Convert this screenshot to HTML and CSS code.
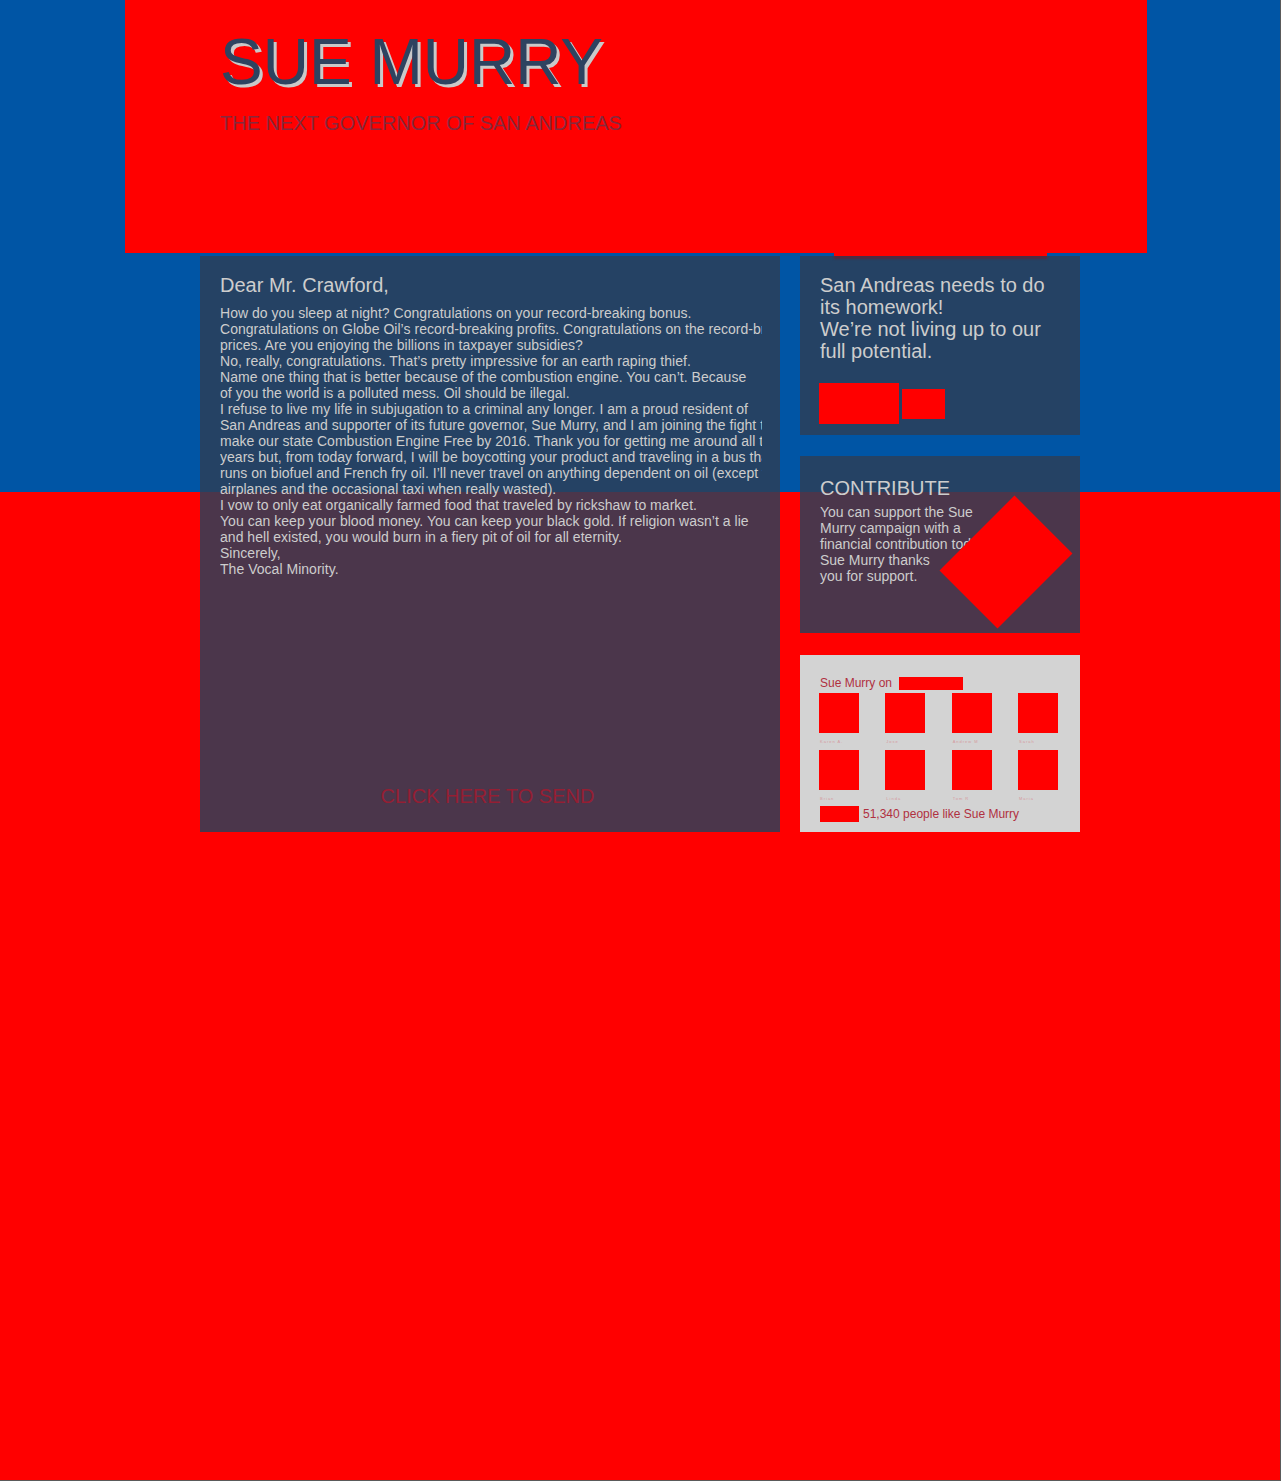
FILE: index.html
```html
<!DOCTYPE html>
<html lang="en">
<head>
<meta charset="utf-8">
<title>Sue Murry — The Next Governor of San Andreas</title>
<link rel="stylesheet" href="styles.css">
</head>
<body>
<div class="page">
  <header class="masthead">
    <h1 class="title">SUE MURRY</h1>
    <p class="tagline">THE NEXT GOVERNOR OF SAN ANDREAS</p>
    <span class="nav-tab"></span>
  </header>

  <main class="content">
    <section class="panel letter">
      <h2 class="letter-greeting">Dear Mr. Crawford,</h2>
      <div class="letter-body">
        How do you sleep at night? Congratulations on your record-breaking bonus.<br>
        Congratulations on Globe Oil’s record-breaking profits. Congratulations on the record-breaking gas<br>
        prices. Are you enjoying the billions in taxpayer subsidies?<br>
        No, really, congratulations. That’s pretty impressive for an earth raping thief.<br>
        Name one thing that is better because of the combustion engine. You can’t. Because<br>
        of you the world is a polluted mess. Oil should be illegal.<br>
        I refuse to live my life in subjugation to a criminal any longer. I am a proud resident of<br>
        San Andreas and supporter of its future governor, Sue Murry, and I am joining the fight to<br>
        make our state Combustion Engine Free by 2016. Thank you for getting me around all these<br>
        years but, from today forward, I will be boycotting your product and traveling in a bus that<br>
        runs on biofuel and French fry oil. I’ll never travel on anything dependent on oil (except for<br>
        airplanes and the occasional taxi when really wasted).<br>
        I vow to only eat organically farmed food that traveled by rickshaw to market.<br>
        You can keep your blood money. You can keep your black gold. If religion wasn’t a lie<br>
        and hell existed, you would burn in a fiery pit of oil for all eternity.<br>
        Sincerely,<br>
        The Vocal Minority.
      </div>
      <a class="send-link" href="#">CLICK HERE TO SEND</a>
    </section>

    <aside class="sidebar">
      <section class="panel promo">
        <p class="promo-text">San Andreas needs to do its homework!<br>We’re not living up to our full potential.</p>
        <div class="promo-buttons">
          <span class="img-box btn-large"></span>
          <span class="img-box btn-small"></span>
        </div>
      </section>

      <section class="panel contribute">
        <h3 class="contribute-title">CONTRIBUTE</h3>
        <p class="contribute-text">You can support the Sue<br>Murry campaign with a<br>financial contribution today.<br>Sue Murry thanks<br>you for support.</p>
        <span class="img-box diamond"></span>
      </section>

      <section class="fb">
        <div class="fb-head">
          <span class="fb-label">Sue Murry on</span>
          <span class="img-box fb-logo"></span>
        </div>
        <div class="fb-grid">
          <div class="fb-fan"><span class="img-box fan-pic"></span><span class="fan-name">Karen A.</span></div>
          <div class="fb-fan"><span class="img-box fan-pic"></span><span class="fan-name">Jose</span></div>
          <div class="fb-fan"><span class="img-box fan-pic"></span><span class="fan-name">Andrew M</span></div>
          <div class="fb-fan"><span class="img-box fan-pic"></span><span class="fan-name">Sarah</span></div>
          <div class="fb-fan"><span class="img-box fan-pic"></span><span class="fan-name">Brian</span></div>
          <div class="fb-fan"><span class="img-box fan-pic"></span><span class="fan-name">Linda</span></div>
          <div class="fb-fan"><span class="img-box fan-pic"></span><span class="fan-name">Tom R</span></div>
          <div class="fb-fan"><span class="img-box fan-pic"></span><span class="fan-name">Maria</span></div>
        </div>
        <div class="fb-foot">
          <span class="img-box fb-like"></span>
          <span class="fb-count">51,340 people like Sue Murry</span>
        </div>
      </section>
    </aside>
  </main>
</div>
</body>
</html>
```

FILE: styles.css
```css
html {
  background: #5a5a5a;
}

body {
  margin: 0;
  font-family: "Liberation Sans", Arial, sans-serif;
}

.page {
  width: 1280px;
  height: 1480px;
  overflow: hidden;
  background: linear-gradient(#0055a5 0, #0055a5 492px, #ff0000 492px, #ff0000 100%);
}

/* ---------- masthead ---------- */
.masthead {
  position: relative;
  margin-left: 125px;
  width: 1022px;
  height: 253px;
  box-sizing: border-box;
  padding: 30px 0 0 95px;
  background: #ff0000;
}

.title {
  margin: 0;
  font-size: 64px;
  line-height: 64px;
  font-weight: normal;
  color: #2e4360;
  text-shadow: 3px 3px 0 #c9c9c9;
}

.tagline {
  margin: 18px 0 0;
  font-size: 20px;
  line-height: 23px;
  color: #85293d;
}

.nav-tab {
  position: absolute;
  left: 709px;
  top: 253px;
  width: 213px;
  height: 3px;
  background: #ff0000;
  box-shadow: 0 3px 2px rgba(110, 30, 45, 0.7);
  z-index: 2;
}

/* ---------- content ---------- */
.content {
  display: flex;
  gap: 20px;
  margin: 3px 0 0 200px;
  width: 880px;
}

.panel {
  box-sizing: border-box;
  background: rgba(44, 64, 88, 0.85);
  color: #cdcdcd;
}

.img-box {
  display: block;
  background: #ff0000;
}

/* letter */
.letter {
  width: 580px;
  height: 576px;
  padding: 18px 20px 24px;
  display: flex;
  flex-direction: column;
}

.letter-greeting {
  margin: 0 0 8px;
  font-size: 20px;
  line-height: 23px;
  font-weight: normal;
}

.letter-body {
  width: 542px;
  font-size: 14px;
  line-height: 16px;
  white-space: nowrap;
  overflow: hidden;
  letter-spacing: 0.03px;
}

.send-link {
  margin-top: auto;
  margin-right: 5px;
  align-self: center;
  font-size: 20px;
  line-height: 23px;
  color: #951e33;
  text-decoration: none;
}

/* sidebar */
.sidebar {
  width: 280px;
  display: flex;
  flex-direction: column;
}

.promo {
  height: 179px;
  padding: 18px 20px 0;
}

.promo-text {
  margin: 0;
  font-size: 20px;
  line-height: 22px;
}

.promo-buttons {
  display: flex;
  align-items: center;
  gap: 3px;
  margin: 21px 0 0 -1px;
}

.btn-large {
  width: 80px;
  height: 41px;
}

.btn-small {
  width: 43px;
  height: 30px;
}

.contribute {
  position: relative;
  margin-top: 21px;
  height: 177px;
  padding: 21px 20px 0;
}

.contribute-title {
  margin: 0;
  font-size: 20px;
  line-height: 22px;
  font-weight: normal;
}

.contribute-text {
  margin: 5px 0 0;
  font-size: 14px;
  line-height: 16px;
  white-space: nowrap;
}

.diamond {
  position: absolute;
  left: 164.5px;
  top: 52.5px;
  width: 82px;
  height: 106px;
  transform: rotate(45deg);
}

/* facebook box */
.fb {
  margin-top: 22px;
  height: 177px;
  box-sizing: border-box;
  padding: 21px 0 0 19px;
  background: #d3d3d3;
  color: #b0303f;
}

.fb-head {
  display: flex;
  align-items: center;
  height: 14px;
  padding-left: 1px;
}

.fb-label {
  font-size: 12px;
  line-height: 14px;
}

.fb-logo {
  width: 64px;
  height: 13px;
  margin-left: 7px;
}

.fb-grid {
  display: grid;
  grid-template-columns: repeat(4, 40px);
  justify-content: space-between;
  row-gap: 1px;
  width: 239px;
  margin-top: 3px;
}

.fb-fan {
  display: flex;
  flex-direction: column;
  height: 56px;
}

.fan-pic {
  width: 40px;
  height: 40px;
}

.fan-name {
  padding: 5px 0 0 1px;
  font-size: 4px;
  line-height: 8px;
  color: #d49a9f;
  white-space: nowrap;
  letter-spacing: 1px;
}

.fb-foot {
  display: flex;
  align-items: center;
  height: 16px;
  padding-left: 1px;
}

.fb-like {
  width: 39px;
  height: 16px;
}

.fb-count {
  margin-left: 4px;
  font-size: 12px;
  line-height: 14px;
}
```
